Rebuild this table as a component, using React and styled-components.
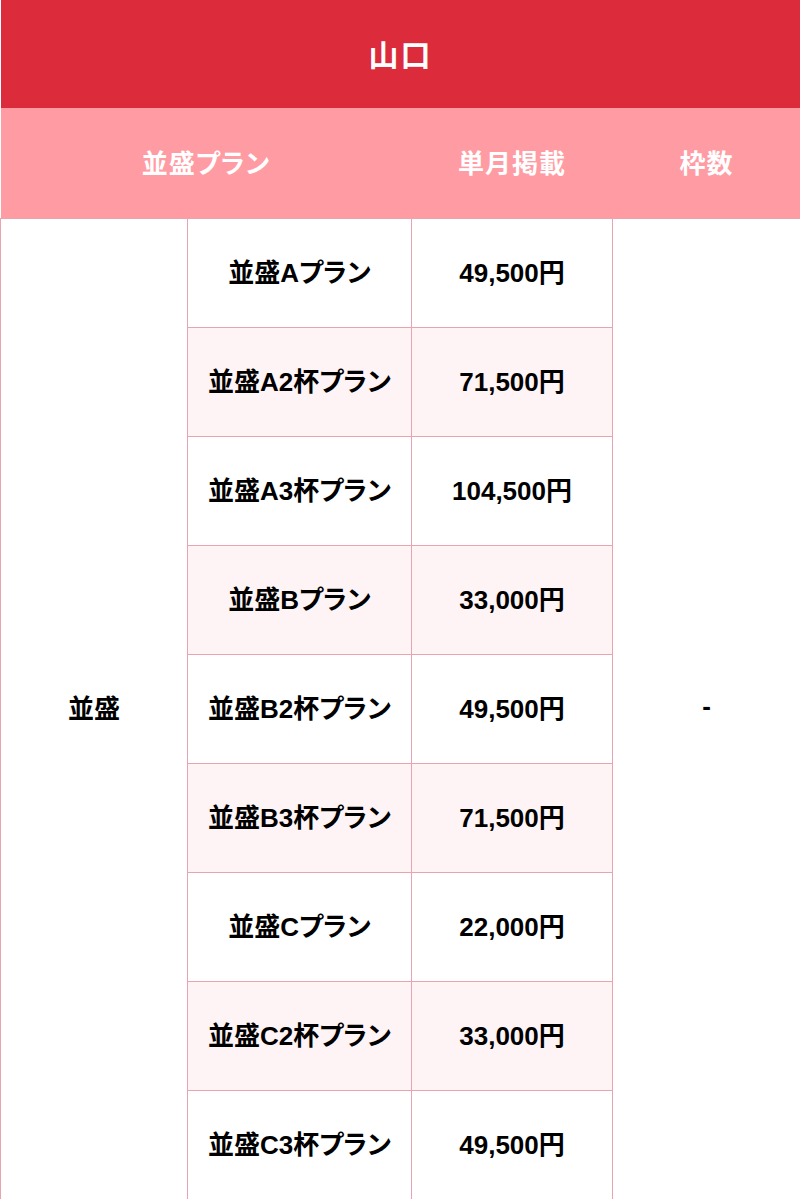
import React from 'react';
import styled, { createGlobalStyle } from 'styled-components';

const GlobalStyle = createGlobalStyle`
  html, body {
    margin: 0;
    padding: 0;
    background: #ffffff;
  }
  body {
    font-family: "Liberation Sans", Arial, "Noto Sans CJK JP", sans-serif;
    font-feature-settings: "palt";
  }
`;

const Table = styled.table`
  width: 800px;
  border-collapse: collapse;
  table-layout: fixed;
  font-weight: 700;
`;

const Title = styled.th`
  height: 106px;
  padding: 0 0 2px;
  background: #dc2b3a;
  color: #ffffff;
  font-size: 30px;
  letter-spacing: 2px;
  text-align: center;
`;

const HeadCell = styled.th`
  height: 106px;
  padding: 0 0 4px;
  background: #ff9ca3;
  color: #ffffff;
  font-size: 26px;
  letter-spacing: 1px;
  text-align: center;
`;

const Cell = styled.td`
  height: 102px;
  padding: 0 0 6px;
  border: 1px solid #e6a5b1;
  background: ${(p) => (p.$shade ? '#fff4f5' : '#ffffff')};
  color: #000000;
  font-size: 26px;
  text-align: center;
  vertical-align: middle;
`;

const plans = [
  ['並盛Aプラン', '49,500円'],
  ['並盛A2杯プラン', '71,500円'],
  ['並盛A3杯プラン', '104,500円'],
  ['並盛Bプラン', '33,000円'],
  ['並盛B2杯プラン', '49,500円'],
  ['並盛B3杯プラン', '71,500円'],
  ['並盛Cプラン', '22,000円'],
  ['並盛C2杯プラン', '33,000円'],
  ['並盛C3杯プラン', '49,500円'],
];

export default function App() {
  return (
    <>
      <GlobalStyle />
      <Table>
        <colgroup>
          <col style={{ width: 187 }} />
          <col style={{ width: 224 }} />
          <col style={{ width: 201 }} />
          <col style={{ width: 188 }} />
        </colgroup>
        <thead>
          <tr>
            <Title colSpan={4}>山口</Title>
          </tr>
          <tr>
            <HeadCell colSpan={2}>並盛プラン</HeadCell>
            <HeadCell>単月掲載</HeadCell>
            <HeadCell>枠数</HeadCell>
          </tr>
        </thead>
        <tbody>
          {plans.map(([name, price], i) => (
            <tr key={name}>
              {i === 0 && <Cell rowSpan={plans.length}>並盛</Cell>}
              <Cell $shade={i % 2 === 1}>{name}</Cell>
              <Cell $shade={i % 2 === 1}>{price}</Cell>
              {i === 0 && <Cell rowSpan={plans.length}>-</Cell>}
            </tr>
          ))}
        </tbody>
      </Table>
    </>
  );
}
